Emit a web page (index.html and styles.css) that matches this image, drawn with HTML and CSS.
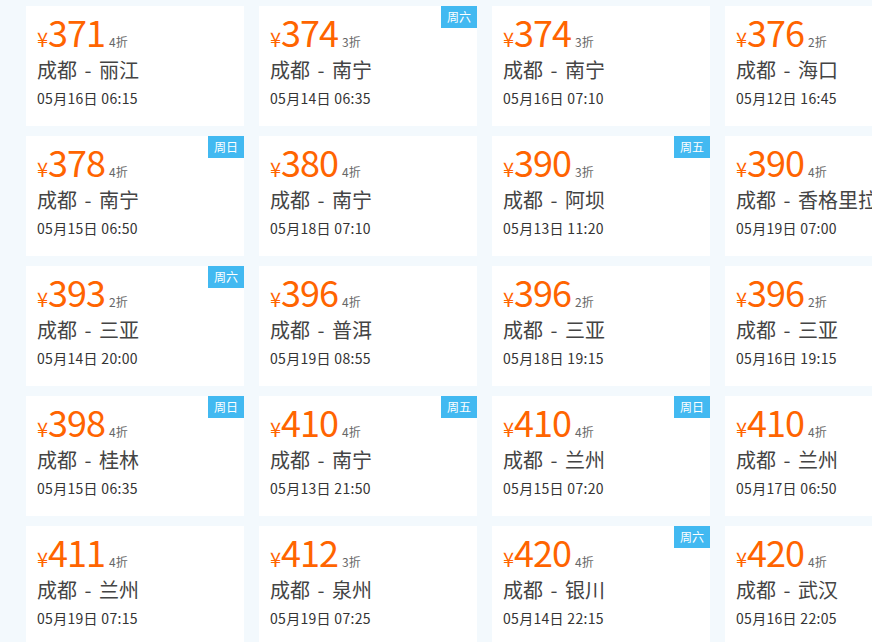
FILE: index.html
```html
<!DOCTYPE html>
<html lang="zh-CN">
<head>
<meta charset="utf-8">
<title>特价机票</title>
<link rel="stylesheet" href="styles.css">
</head>
<body>
<div class="grid">
  <div class="card"><div class="price"><span class="yen">¥</span><span class="num">371</span><span class="disc">4折</span></div><div class="route">成都 - 丽江</div><div class="date">05月16日 06:15</div></div>
  <div class="card"><span class="badge">周六</span><div class="price"><span class="yen">¥</span><span class="num">374</span><span class="disc">3折</span></div><div class="route">成都 - 南宁</div><div class="date">05月14日 06:35</div></div>
  <div class="card"><div class="price"><span class="yen">¥</span><span class="num">374</span><span class="disc">3折</span></div><div class="route">成都 - 南宁</div><div class="date">05月16日 07:10</div></div>
  <div class="card"><div class="price"><span class="yen">¥</span><span class="num">376</span><span class="disc">2折</span></div><div class="route">成都 - 海口</div><div class="date">05月12日 16:45</div></div>

  <div class="card"><span class="badge">周日</span><div class="price"><span class="yen">¥</span><span class="num">378</span><span class="disc">4折</span></div><div class="route">成都 - 南宁</div><div class="date">05月15日 06:50</div></div>
  <div class="card"><div class="price"><span class="yen">¥</span><span class="num">380</span><span class="disc">4折</span></div><div class="route">成都 - 南宁</div><div class="date">05月18日 07:10</div></div>
  <div class="card"><span class="badge">周五</span><div class="price"><span class="yen">¥</span><span class="num">390</span><span class="disc">3折</span></div><div class="route">成都 - 阿坝</div><div class="date">05月13日 11:20</div></div>
  <div class="card"><div class="price"><span class="yen">¥</span><span class="num">390</span><span class="disc">4折</span></div><div class="route">成都 - 香格里拉</div><div class="date">05月19日 07:00</div></div>

  <div class="card"><span class="badge">周六</span><div class="price"><span class="yen">¥</span><span class="num">393</span><span class="disc">2折</span></div><div class="route">成都 - 三亚</div><div class="date">05月14日 20:00</div></div>
  <div class="card"><div class="price"><span class="yen">¥</span><span class="num">396</span><span class="disc">4折</span></div><div class="route">成都 - 普洱</div><div class="date">05月19日 08:55</div></div>
  <div class="card"><div class="price"><span class="yen">¥</span><span class="num">396</span><span class="disc">2折</span></div><div class="route">成都 - 三亚</div><div class="date">05月18日 19:15</div></div>
  <div class="card"><div class="price"><span class="yen">¥</span><span class="num">396</span><span class="disc">2折</span></div><div class="route">成都 - 三亚</div><div class="date">05月16日 19:15</div></div>

  <div class="card"><span class="badge">周日</span><div class="price"><span class="yen">¥</span><span class="num">398</span><span class="disc">4折</span></div><div class="route">成都 - 桂林</div><div class="date">05月15日 06:35</div></div>
  <div class="card"><span class="badge">周五</span><div class="price"><span class="yen">¥</span><span class="num">410</span><span class="disc">4折</span></div><div class="route">成都 - 南宁</div><div class="date">05月13日 21:50</div></div>
  <div class="card"><span class="badge">周日</span><div class="price"><span class="yen">¥</span><span class="num">410</span><span class="disc">4折</span></div><div class="route">成都 - 兰州</div><div class="date">05月15日 07:20</div></div>
  <div class="card"><div class="price"><span class="yen">¥</span><span class="num">410</span><span class="disc">4折</span></div><div class="route">成都 - 兰州</div><div class="date">05月17日 06:50</div></div>

  <div class="card"><div class="price"><span class="yen">¥</span><span class="num">411</span><span class="disc">4折</span></div><div class="route">成都 - 兰州</div><div class="date">05月19日 07:15</div></div>
  <div class="card"><div class="price"><span class="yen">¥</span><span class="num">412</span><span class="disc">3折</span></div><div class="route">成都 - 泉州</div><div class="date">05月19日 07:25</div></div>
  <div class="card"><span class="badge">周六</span><div class="price"><span class="yen">¥</span><span class="num">420</span><span class="disc">4折</span></div><div class="route">成都 - 银川</div><div class="date">05月14日 22:15</div></div>
  <div class="card"><div class="price"><span class="yen">¥</span><span class="num">420</span><span class="disc">4折</span></div><div class="route">成都 - 武汉</div><div class="date">05月16日 22:05</div></div>
</div>
</body>
</html>
```

FILE: styles.css
```css
html, body {
  margin: 0;
  padding: 0;
  background: #f3f9fd;
  overflow: hidden;
}
body {
  font-family: "Noto Sans CJK SC", "Noto Sans", sans-serif;
  color: #3a3a3a;
}
.grid {
  display: grid;
  grid-template-columns: repeat(4, 218px);
  grid-auto-rows: 120px;
  column-gap: 15px;
  row-gap: 10px;
  padding: 6px 0 0 26px;
  width: max-content;
}
.card {
  position: relative;
  background: #fff;
  padding: 5px 0 0 11px;
  box-sizing: border-box;
  white-space: nowrap;
}
.badge {
  position: absolute;
  top: 0;
  right: 0;
  width: 36px;
  height: 22px;
  line-height: 22px;
  text-align: center;
  background: #42b9f1;
  color: #fff;
  font-size: 12px;
}
.price {
  height: 40px;
  line-height: 40px;
  color: #ff6400;
}
.yen {
  font-size: 20px;
}
.num {
  font-size: 36px;
  letter-spacing: -1px;
}
.disc {
  font-size: 12px;
  color: #666;
  margin-left: 4px;
}
.route {
  font-size: 20px;
  line-height: 26px;
  margin-top: 6px;
  color: #444;
  word-spacing: 3px;
}
.date {
  font-size: 14px;
  line-height: 20px;
  margin-top: 5px;
  color: #333;
  letter-spacing: 0.3px;
}
```
